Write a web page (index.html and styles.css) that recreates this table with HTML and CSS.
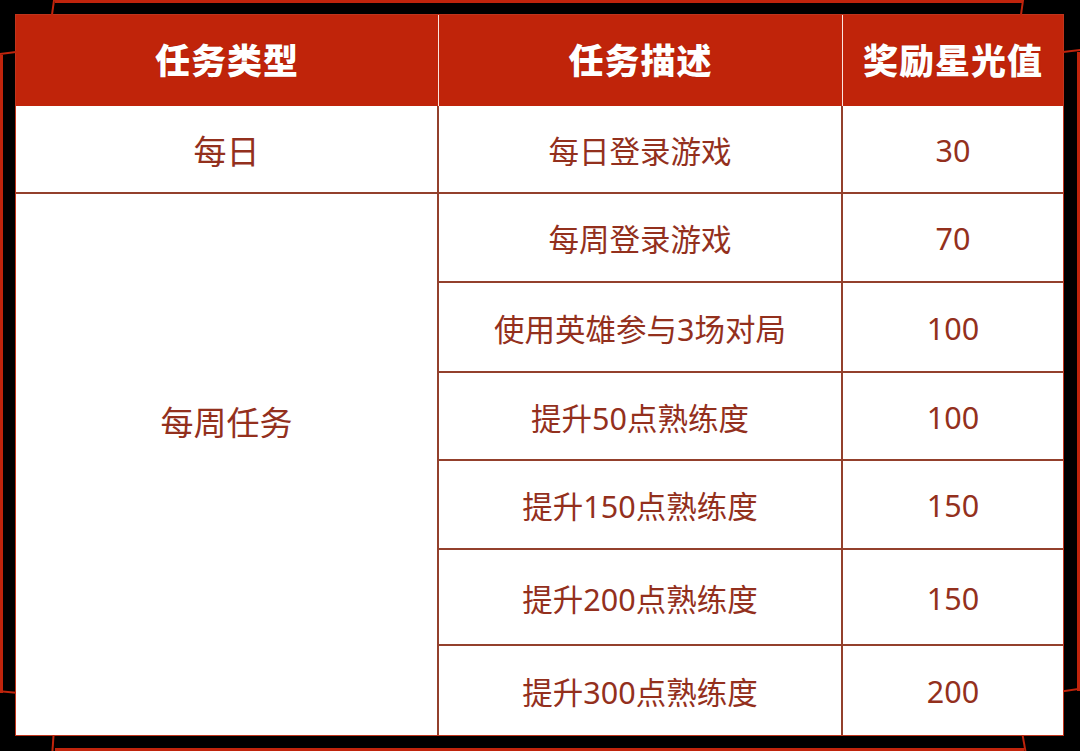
FILE: index.html
```html
<!DOCTYPE html>
<html lang="zh">
<head>
<meta charset="utf-8">
<link rel="stylesheet" href="styles.css">
</head>
<body>
<div class="frame">
  <span class="deco d-top"></span>
  <span class="deco d-bottom"></span>
  <span class="deco d-left"></span>
  <span class="deco d-right"></span>
  <span class="deco s-tl-v"></span>
  <span class="deco s-tl-h"></span>
  <span class="deco s-tr-v"></span>
  <span class="deco s-tr-h"></span>
  <span class="deco s-bl-v"></span>
  <span class="deco s-bl-h"></span>
  <span class="deco s-br-v"></span>
  <span class="deco s-br-h"></span>
  <div class="table">
    <div class="th">任务类型</div>
    <div class="th">任务描述</div>
    <div class="th last">奖励星光值</div>

    <div class="td type">每日</div>
    <div class="td">每日登录游戏</div>
    <div class="td last">30</div>

    <div class="td type span">每周任务</div>
    <div class="td">每周登录游戏</div>
    <div class="td last">70</div>
    <div class="td">使用英雄参与3场对局</div>
    <div class="td last">100</div>
    <div class="td">提升50点熟练度</div>
    <div class="td last">100</div>
    <div class="td">提升150点熟练度</div>
    <div class="td last">150</div>
    <div class="td">提升200点熟练度</div>
    <div class="td last">150</div>
    <div class="td bottom">提升300点熟练度</div>
    <div class="td last bottom">200</div>
  </div>
</div>
</body>
</html>
```
FILE: styles.css
```css
html, body {
  margin: 0;
  padding: 0;
  background: #000;
}
.frame {
  position: relative;
  width: 1080px;
  height: 751px;
  box-sizing: border-box;
  padding: 15px 17px 16px 16px;
  background: #000;
  overflow: hidden;
}
.deco {
  position: absolute;
  background: #c0240c;
}
.d-top { left: 55px; right: 57px; top: 0; height: 3px; }
.d-bottom { left: 55px; right: 56px; bottom: 0; height: 3px; }
.d-left { left: 0; top: 55px; width: 3px; height: 638px; }
.d-right { right: 0; top: 52px; width: 3px; height: 639px; }
.s-tl-v { left: 52px; top: 0; width: 2px; height: 15px; transform: skewX(-8deg); }
.s-tl-h { left: 0; top: 52px; width: 16px; height: 2px; transform: skewY(-8deg); }
.s-tr-v { left: 1021px; top: 0; width: 2px; height: 15px; transform: skewX(-8deg); }
.s-tr-h { left: 1063px; top: 50px; width: 17px; height: 2px; transform: skewY(-6deg); }
.s-bl-v { left: 52px; top: 735px; width: 2px; height: 16px; transform: skewX(-4deg); }
.s-bl-h { left: 0; top: 691px; width: 16px; height: 2px; transform: skewY(6deg); }
.s-br-v { left: 1023px; top: 735px; width: 2px; height: 16px; transform: skewX(10deg); }
.s-br-h { left: 1063px; top: 689px; width: 17px; height: 2px; transform: skewY(-8deg); }

.table {
  display: grid;
  grid-template-columns: 423px 404px 220px;
  grid-template-rows: 91px 88px 89px 90px 88px 89px 96px 89px;
  width: 1047px;
  height: 720px;
  background: #fff;
  box-shadow: 0 0 0 1px #c0341c;
  font-family: "Noto Sans", "Noto Sans CJK SC", sans-serif;
}
.th {
  background: #c0240a;
  color: #fff;
  font-family: "Noto Sans CJK SC", sans-serif;
  font-size: 35px;
  font-weight: 900;
  letter-spacing: 1px;
  display: flex;
  align-items: center;
  justify-content: center;
  padding-bottom: 4px;
  box-sizing: border-box;
  border-right: 1px solid #fbe6df;
  text-shadow: 0 0 1px rgba(120, 20, 0, 0.6);
}
.th.last { border-right: none; }
.td {
  display: flex;
  align-items: center;
  justify-content: center;
  color: #93301d;
  font-size: 30.5px;
  font-weight: 400;
  border-right: 2px solid #93402c;
  border-bottom: 2px solid #93402c;
  box-sizing: border-box;
  padding-top: 1px;
}
.td.type { font-size: 33px; }
.td.last { border-right: none; }
.td.bottom { border-bottom: none; }
.td.span {
  grid-row: 3 / 9;
  border-bottom: none;
  padding-bottom: 89px;
}
```
